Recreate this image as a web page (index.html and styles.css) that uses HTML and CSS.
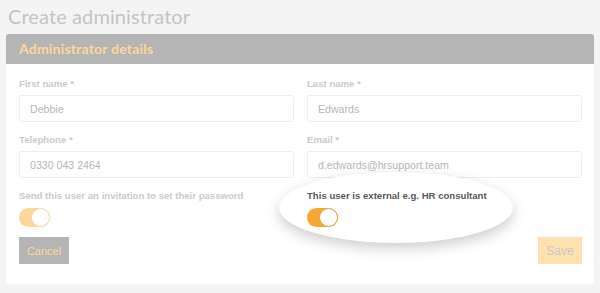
FILE: index.html
```html
<!DOCTYPE html>
<html>
	<head>
		<meta charset="utf-8">
		<title>Create administrator</title>
		<link rel="stylesheet" href="styles.css">
	</head>
	<body>
		<h1 class="page-title">Create administrator</h1>
		<div class="card">
			<div class="card-header">Administrator details</div>
			<form class="card-body">
				<div class="field">
					<label class="field-label">First name *</label>
					<input class="field-input" type="text" value="Debbie" />
				</div>
				<div class="field">
					<label class="field-label">Last name *</label>
					<input class="field-input" type="text" value="Edwards" />
				</div>
				<div class="field">
					<label class="field-label">Telephone *</label>
					<input class="field-input" type="text" value="0330 043 2464" />
				</div>
				<div class="field">
					<label class="field-label">Email *</label>
					<input class="field-input" type="text" value="d.edwards@hrsupport.team" />
				</div>
				<div class="field">
					<label class="field-label">Send this user an invitation to set their password</label>
					<span class="toggle"><span class="knob"></span></span>
				</div>
				<div class="field highlight">
					<span class="spotlight"></span>
					<label class="field-label">This user is external e.g. HR consultant</label>
					<span class="toggle on"><span class="knob"></span></span>
				</div>
				<div class="actions">
					<button type="button" class="btn cancel">Cancel</button>
					<button type="button" class="btn save">Save</button>
				</div>
			</form>
		</div>
	</body>
</html>
```

FILE: styles.css
```css
body{
	margin: 0;
	background: #f4f4f4;
	font-family: "Liberation Sans", Arial, sans-serif;
}
.page-title{
	margin: 0;
	padding: 3px 0 0 8px;
	height: 31px;
	font-family: Lato, "Liberation Sans", sans-serif;
	font-weight: 400;
	font-size: 20px;
	line-height: 26px;
	color: #c4c4c4;
	letter-spacing: 0.1px;
}
.card{
	margin: 0 6px;
	height: 250px;
	background: #fff;
	border-radius: 3px;
	overflow: hidden;
}
.card-header{
	height: 30px;
	line-height: 30px;
	padding-left: 13px;
	background: #b5b5b5;
	color: #fbd79b;
	font-family: Lato, "Liberation Sans", sans-serif;
	font-weight: 700;
	font-size: 14px;
	letter-spacing: 0.2px;
}
.card-body{
	display: grid;
	grid-template-columns: 275px 275px;
	column-gap: 13px;
	row-gap: 11px;
	padding: 13px 12px 0 13px;
}
.field{
	display: flex;
	flex-direction: column;
	align-items: flex-start;
	gap: 4px;
}
.field-label{
	font-size: 9.6px;
	line-height: 14px;
	font-weight: 700;
	color: #cbcbcb;
}
.field-input{
	box-sizing: border-box;
	width: 100%;
	height: 27px;
	border: 1px solid #eeeeee;
	border-radius: 3px;
	padding: 0 10px;
	font-family: "Liberation Sans", Arial, sans-serif;
	font-size: 10.6px;
	color: #b8b8b8;
	outline: 0;
}
.toggle{
	position: relative;
	display: block;
	margin-top: 1px;
	width: 31px;
	height: 19px;
	border-radius: 10px;
	background: #f9d898;
}
.toggle .knob{
	position: absolute;
	top: 0;
	right: 0;
	box-sizing: border-box;
	width: 19px;
	height: 19px;
	border-radius: 50%;
	background: #fff;
	border: 1px solid #f6d9a6;
}
.toggle.on{
	background: #f6a732;
}
.toggle.on .knob{
	border-color: #e9a640;
}
.highlight{
	position: relative;
}
.highlight .field-label,
.highlight .toggle{
	position: relative;
	z-index: 2;
}
.highlight .field-label{
	color: #5a5a5a;
}
.spotlight{
	position: absolute;
	left: -28px;
	top: -17px;
	width: 234px;
	height: 71px;
	border-radius: 50%;
	background: #fff;
	box-shadow: 0 5px 14px rgba(0,0,0,.2);
	z-index: 1;
}
.actions{
	grid-column: 1 / 3;
	display: flex;
	justify-content: space-between;
	margin-top: -1px;
}
.btn{
	height: 27px;
	border: 0;
	border-radius: 0;
	font-family: "Liberation Sans", Arial, sans-serif;
	font-size: 11px;
	padding: 0;
}
.cancel{
	width: 50px;
	background: #b5b5b5;
	color: #f9d79b;
}
.save{
	width: 44px;
	background: #fde2b0;
	color: #c9c9c9;
	font-size: 12px;
}
```
